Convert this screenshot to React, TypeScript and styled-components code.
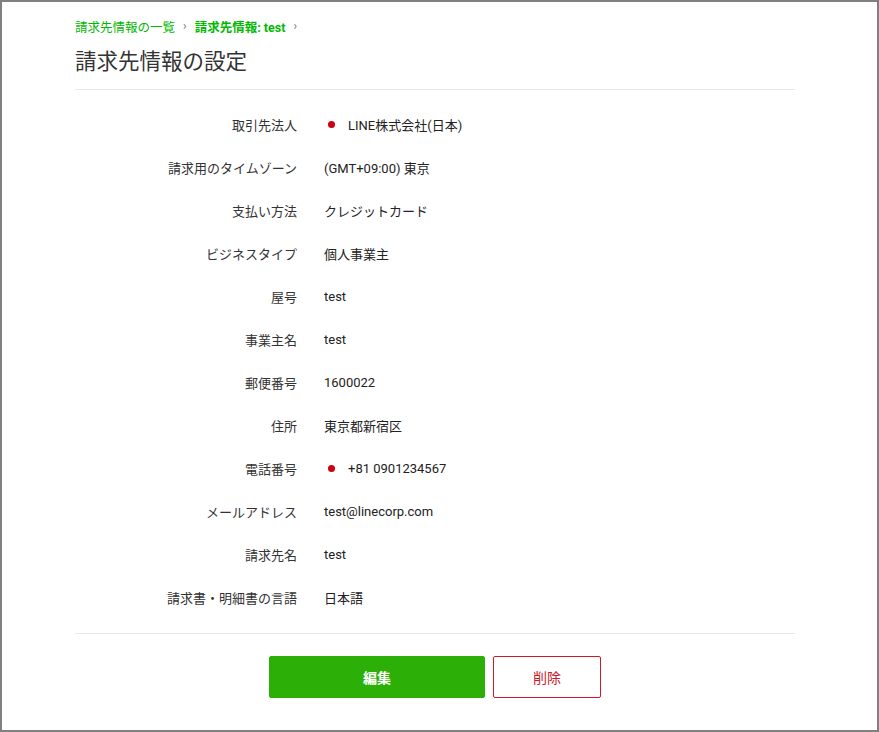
import React from 'react';
import styled, { createGlobalStyle } from 'styled-components';

const GlobalStyle = createGlobalStyle`
  html, body {
    margin: 0;
    padding: 0;
    background: #ffffff;
  }
  body {
    font-family: Roboto, "Noto Sans CJK JP", sans-serif;
    color: #333333;
  }
  * {
    box-sizing: border-box;
  }
`;

interface Field {
  label: string;
  value: string;
  required?: boolean;
}

const fields: Field[] = [
  { label: '取引先法人', value: 'LINE株式会社(日本)', required: true },
  { label: '請求用のタイムゾーン', value: '(GMT+09:00) 東京' },
  { label: '支払い方法', value: 'クレジットカード' },
  { label: 'ビジネスタイプ', value: '個人事業主' },
  { label: '屋号', value: 'test' },
  { label: '事業主名', value: 'test' },
  { label: '郵便番号', value: '1600022' },
  { label: '住所', value: '東京都新宿区' },
  { label: '電話番号', value: '+81 0901234567', required: true },
  { label: 'メールアドレス', value: 'test@linecorp.com' },
  { label: '請求先名', value: 'test' },
  { label: '請求書・明細書の言語', value: '日本語' },
];

const App: React.FC = () => {
  return (
    <>
      <GlobalStyle />
      <Frame>
        <Page>
          <Breadcrumb>
            <CrumbLink>請求先情報の一覧</CrumbLink>
            <CrumbSep>›</CrumbSep>
            <CrumbLink bold>請求先情報: test</CrumbLink>
            <CrumbSep>›</CrumbSep>
          </Breadcrumb>
          <Title>請求先情報の設定</Title>
          <DetailList>
            {fields.map((field) => (
              <DetailRow key={field.label}>
                <Label>{field.label}</Label>
                <Value>
                  {field.required && <Dot />}
                  {field.value}
                </Value>
              </DetailRow>
            ))}
          </DetailList>
          <ButtonBar>
            <PrimaryButton>編集</PrimaryButton>
            <DangerButton>削除</DangerButton>
          </ButtonBar>
        </Page>
      </Frame>
    </>
  );
};

const Frame = styled.div`
  width: 879px;
  height: 732px;
  border: 2px solid #808080;
  background: #ffffff;
  overflow: hidden;
`;

const Page = styled.div`
  padding: 15px 82px 0 73px;
`;

const Breadcrumb = styled.nav`
  display: flex;
  align-items: center;
  height: 18px;
  font-size: 12.5px;
`;

const CrumbLink = styled.a<{ bold?: boolean }>`
  color: #00b900;
  font-weight: ${({ bold }) => (bold ? 700 : 400)};
  text-decoration: none;
  cursor: pointer;
`;

const CrumbSep = styled.span`
  color: #777777;
  font-size: 12px;
  margin: 0 8px 0 8px;
`;

const Title = styled.h1`
  margin: 13px 0 0;
  height: 28px;
  line-height: 28px;
  font-size: 21.5px;
  font-weight: 400;
  color: #333333;
  padding-bottom: 13px;
  box-sizing: content-box;
  border-bottom: 1px solid #e8e8e8;
`;

const DetailList = styled.dl`
  margin: 0;
  padding: 13px 0 14px;
  border-bottom: 1px solid #e8e8e8;
`;

const DetailRow = styled.div`
  display: grid;
  grid-template-columns: 222px 1fr;
  column-gap: 27px;
  align-items: center;
  height: 43px;
  font-size: 13px;
`;

const Label = styled.dt`
  text-align: right;
  color: #333333;
`;

const Value = styled.dd`
  margin: 0;
  display: flex;
  align-items: center;
  color: #222222;
`;

const Dot = styled.span`
  width: 7px;
  height: 7px;
  border-radius: 50%;
  background: #cc0010;
  margin: 0 13px 0 4px;
  flex-shrink: 0;
`;

const ButtonBar = styled.div`
  display: flex;
  justify-content: center;
  gap: 8px;
  padding-top: 22px;
`;

const BaseButton = styled.button`
  height: 42px;
  border-radius: 2px;
  font-family: Roboto, "Noto Sans CJK JP", sans-serif;
  font-size: 14px;
  cursor: pointer;
`;

const PrimaryButton = styled(BaseButton)`
  width: 216px;
  background: #2caf07;
  border: 1px solid #2caf07;
  color: #ffffff;
  font-weight: 700;
`;

const DangerButton = styled(BaseButton)`
  width: 108px;
  background: #ffffff;
  border: 1px solid #cc1a2a;
  color: #cc1a2a;
`;

export default App;
